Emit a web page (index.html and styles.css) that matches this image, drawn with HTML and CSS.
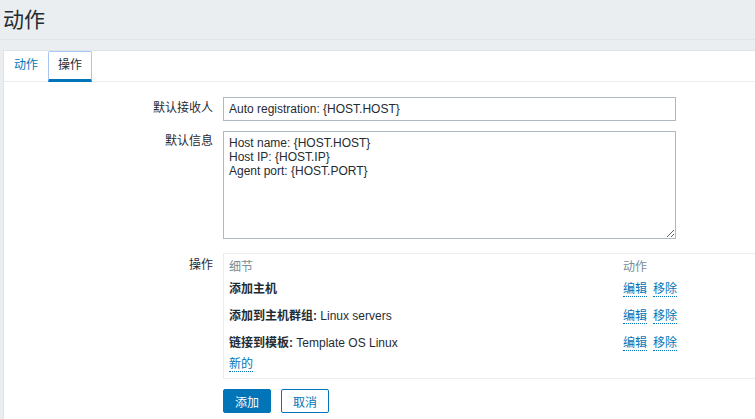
FILE: index.html
```html
<!DOCTYPE html>
<html lang="zh-CN">
<head>
<meta charset="utf-8">
<title>动作</title>
<link rel="stylesheet" href="styles.css">
</head>
<body>
<div class="page">
  <header class="top"><h1 class="title">动作</h1></header>
  <main class="panel">
    <nav class="tabs">
      <a class="tab">动作</a>
      <a class="tab active">操作</a>
    </nav>
    <div class="form">
      <div class="lbl l1">默认接收人</div>
      <div class="field"><input class="text" type="text" value="Auto registration: {HOST.HOST}"></div>
      <div class="lbl l2">默认信息</div>
      <div class="field"><textarea class="area">Host name: {HOST.HOST}
Host IP: {HOST.IP}
Agent port: {HOST.PORT}</textarea></div>
      <div class="lbl l3">操作</div>
      <div class="ops">
        <div class="th">细节</div>
        <div class="th">动作</div>
        <div class="td"><b>添加主机</b></div>
        <div class="td"><a class="link">编辑</a><a class="link">移除</a></div>
        <div class="td"><b>添加到主机群组:</b> Linux servers</div>
        <div class="td"><a class="link">编辑</a><a class="link">移除</a></div>
        <div class="td"><b>链接到模板:</b> Template OS Linux</div>
        <div class="td"><a class="link">编辑</a><a class="link">移除</a></div>
        <div class="td last"><a class="link">新的</a></div>
        <div class="td last"></div>
      </div>
      <div></div>
      <div class="buttons">
        <button class="btn primary" type="button">添加</button>
        <button class="btn alt" type="button">取消</button>
      </div>
    </div>
  </main>
</div>
</body>
</html>
```

FILE: styles.css
```css
html, body {
  margin: 0;
  padding: 0;
  overflow: hidden;
}
body {
  background: #ebeef0;
  font-family: "Liberation Sans", "Noto Sans CJK SC", sans-serif;
  font-size: 12px;
  color: #1f2c33;
}
.page {
  height: 100vh;
  display: flex;
  flex-direction: column;
}
.top {
  height: 39px;
  border-bottom: 1px solid #dfe4e7;
  flex: none;
}
.title {
  margin: 0;
  padding-left: 3px;
  font-size: 21px;
  font-weight: normal;
  line-height: 40px;
}
.panel {
  flex: 1;
  margin: 10px 0 0 3px;
  background: #fff;
  border-top: 1px solid #dfe4e7;
  border-left: 1px solid #dfe4e7;
  overflow: hidden;
}
.tabs {
  display: flex;
  height: 30px;
  border-bottom: 1px solid #ebeef0;
}
.tab {
  box-sizing: border-box;
  height: 31px;
  margin-bottom: -1px;
  padding: 0 9px;
  border: 1px solid transparent;
  border-bottom: 3px solid transparent;
  line-height: 27px;
  color: #0275b8;
  cursor: pointer;
}
.tab.active {
  color: #1f2c33;
  border-color: #a8c6f5;
  border-bottom-color: #0275b8;
  border-radius: 2px 2px 0 0;
}
.form {
  display: grid;
  grid-template-columns: 209px 1fr;
  column-gap: 10px;
  row-gap: 10px;
  padding-top: 15px;
}
.lbl {
  text-align: right;
  line-height: 16px;
}
.l1 { padding-top: 3px; }
.l2 { padding-top: 2px; }
.l3 { padding-top: 4px; margin-top: 4px; }
.text {
  box-sizing: border-box;
  display: block;
  width: 453px;
  height: 24px;
  margin: 0;
  padding: 0 5px;
  border: 1px solid #acbbc2;
  font-family: "Liberation Sans", "Noto Sans CJK SC", sans-serif;
  font-size: 12px;
  color: #1f2c33;
  outline: none;
}
.area {
  box-sizing: border-box;
  display: block;
  width: 453px;
  height: 108px;
  margin: 0;
  padding: 4px 5px;
  border: 1px solid #acbbc2;
  font-family: "Liberation Sans", "Noto Sans CJK SC", sans-serif;
  font-size: 12px;
  line-height: 14px;
  color: #1f2c33;
  outline: none;
}
.ops {
  margin-top: 4px;
  display: grid;
  grid-template-columns: 394px 1fr;
  border: 1px solid #ebeef0;
  border-right: none;
  padding-left: 5px;
  line-height: 16px;
}
.th {
  padding-top: 5px;
  color: #768d99;
}
.td {
  padding: 6px 0 5px;
}
.td.last {
  padding: 0 0 6px;
}
.td b {
  font-weight: bold;
}
.link {
  color: #0275b8;
  border-bottom: 1px dotted #0275b8;
  margin-right: 6px;
  cursor: pointer;
}
.buttons {
  display: flex;
  gap: 10px;
}
.btn {
  box-sizing: border-box;
  width: 48px;
  height: 24px;
  margin: 0;
  padding: 0;
  border-radius: 2px;
  font-family: "Liberation Sans", "Noto Sans CJK SC", sans-serif;
  font-size: 12px;
  cursor: pointer;
}
.primary {
  background: #0275b8;
  border: 1px solid #0275b8;
  color: #fff;
}
.alt {
  background: #fff;
  border: 1px solid #0275b8;
  color: #0275b8;
}
```
